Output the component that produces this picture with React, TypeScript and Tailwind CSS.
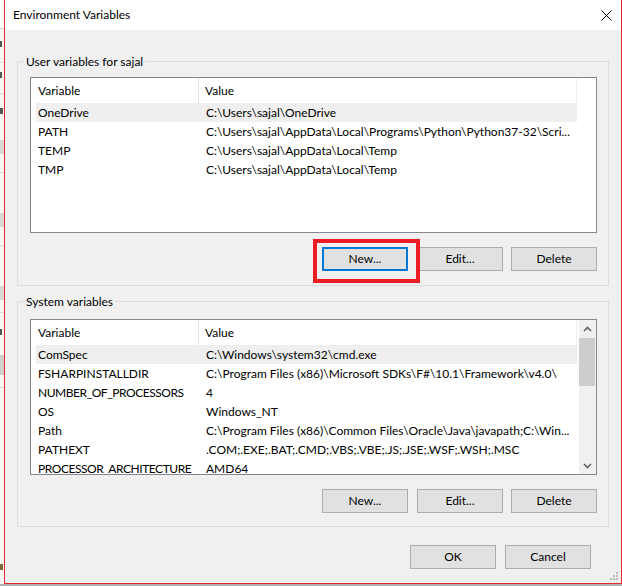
import React from "react";

const FONT = { fontFamily: 'Lato, "Liberation Sans", Arial, sans-serif' };

type Row = [string, string];

const userRows: Row[] = [
  ["OneDrive", "C:\\Users\\sajal\\OneDrive"],
  ["PATH", "C:\\Users\\sajal\\AppData\\Local\\Programs\\Python\\Python37-32\\Scri..."],
  ["TEMP", "C:\\Users\\sajal\\AppData\\Local\\Temp"],
  ["TMP", "C:\\Users\\sajal\\AppData\\Local\\Temp"],
];

const sysRows: Row[] = [
  ["ComSpec", "C:\\Windows\\system32\\cmd.exe"],
  ["FSHARPINSTALLDIR", "C:\\Program Files (x86)\\Microsoft SDKs\\F#\\10.1\\Framework\\v4.0\\"],
  ["NUMBER_OF_PROCESSORS", "4"],
  ["OS", "Windows_NT"],
  ["Path", "C:\\Program Files (x86)\\Common Files\\Oracle\\Java\\javapath;C:\\Win..."],
  ["PATHEXT", ".COM;.EXE;.BAT;.CMD;.VBS;.VBE;.JS;.JSE;.WSF;.WSH;.MSC"],
  ["PROCESSOR_ARCHITECTURE", "AMD64"],
];

function Columns({ rows }: { rows: Row[] }) {
  return (
    <div className="flex-1 overflow-hidden pl-[5px]">
      <div className="flex h-[25px]">
        <div className="w-[163px] pl-[2px] flex items-center border-r border-[#e5e5e5]">Variable</div>
        <div className="w-[378px] pl-[6px] flex items-center border-r border-[#f0f0f0]">Value</div>
      </div>
      {rows.map((r, i) => (
        <div
          key={r[0]}
          className={`flex h-[19px] w-[541px] items-center whitespace-nowrap ${i === 0 ? "bg-[#efefef]" : ""}`}
        >
          <div
            className={`w-[163px] pl-[2px] overflow-hidden ${
              r[0].length > 18 ? "tracking-[-0.45px]" : ""
            }`}
          >
            {r[0]}
          </div>
          <div className="w-[378px] pl-[7px] overflow-hidden">{r[1]}</div>
        </div>
      ))}
    </div>
  );
}

function Btn({ label, focus, className = "" }: { label: string; focus?: boolean; className?: string }) {
  return (
    <div
      className={`relative w-[86px] h-[24px] bg-[#e1e1e1] flex items-center justify-center ${
        focus ? "border-2 border-[#0078d7]" : "border border-[#adadad]"
      } ${className}`}
    >
      {label}
    </div>
  );
}

function Chevron({ up }: { up?: boolean }) {
  return (
    <svg width="9" height="6" viewBox="0 0 9 6">
      <polyline
        points={up ? "1,5 4.5,1.5 8,5" : "1,1 4.5,4.5 8,1"}
        fill="none"
        stroke="#606060"
        strokeWidth="1.6"
      />
    </svg>
  );
}

function LeftStrip() {
  return (
    <div className="w-[4px] flex flex-col bg-[#f7f7f7]">
      <div className="h-[28px] bg-white" />
      <div className="h-[1px] bg-[#d9d9d9]" />
      <div className="h-[12px]" />
      <div className="h-[6px] w-[2px] bg-[#555]" />
      <div className="h-[15px]" />
      <div className="h-[1px] bg-[#dcdcdc]" />
      <div className="h-[9px]" />
      <div className="h-[6px] w-[2px] bg-[#555]" />
      <div className="h-[15px]" />
      <div className="h-[1px] bg-[#dcdcdc]" />
      <div className="h-[14px]" />
      <div className="h-[6px] w-[3px] bg-[#555]" />
      <div className="h-[26px]" />
      <div className="h-[14px] bg-[#d9d9d9]" />
      <div className="h-[18px]" />
      <div className="h-[1px] bg-[#dcdcdc]" />
      <div className="h-[40px]" />
      <div className="h-[14px] bg-[#d9d9d9]" />
      <div className="h-[18px]" />
      <div className="h-[1px] bg-[#dcdcdc]" />
      <div className="h-[40px]" />
      <div className="h-[14px] bg-[#d9d9d9]" />
      <div className="h-[12px]" />
      <div className="h-[1px] bg-[#dcdcdc]" />
      <div className="h-[16px]" />
      <div className="h-[6px] w-[2px] bg-[#555]" />
      <div className="h-[20px]" />
      <div className="h-[20px] bg-[#d0d0d0]" />
      <div className="h-[12px]" />
      <div className="h-[1px] bg-[#dcdcdc]" />
      <div className="flex-1" />
      <div className="h-[6px] w-[3px] bg-[#7a6a40]" />
      <div className="h-[14px]" />
    </div>
  );
}

export default function App() {
  return (
    <div className="w-[622px] h-[586px] flex flex-col text-[12px] text-black bg-[#b0b0b0]" style={FONT}>
      <div className="flex h-[584px]">
        <LeftStrip />
        <div className="relative w-[618px] flex flex-col border-l border-r border-b border-[#e0282e]">
          {/* Title bar */}
          <div className="h-[30px] bg-white flex items-center justify-between pl-[8px] pr-[9px]">
            <span>Environment Variables</span>
            <svg width="11" height="11" viewBox="0 0 11 11">
              <path d="M0.5 0.5 L10.5 10.5 M10.5 0.5 L0.5 10.5" stroke="#000" strokeWidth="1" />
            </svg>
          </div>
          {/* Body */}
          <div className="flex-1 bg-[#f0f0f0] px-[12px] pt-[23px] flex flex-col">
            {/* User variables group */}
            <fieldset className="border border-[#dcdcdc]">
              <legend className="ml-[6px] px-[2px] leading-[17px]">User variables for sajal</legend>
              <div className="pl-[12px] pr-[11px] pt-[7px] pb-[14px] flex flex-col">
                <div className="h-[156px] border border-[#828790] bg-white flex">
                  <Columns rows={userRows} />
                </div>
                <div className="mt-[14px] flex justify-end">
                  <Btn label="New..." focus className="mr-[9px]" />
                  <Btn label="Edit..." className="mr-[8px]" />
                  <Btn label="Delete" />
                </div>
              </div>
            </fieldset>
            {/* System variables group */}
            <fieldset className="mt-[7px] border border-[#dcdcdc]">
              <legend className="ml-[6px] px-[2px] leading-[17px]">System variables</legend>
              <div className="pl-[12px] pr-[11px] pt-[9px] pb-[13px] flex flex-col">
                <div className="h-[156px] border border-[#828790] bg-white flex">
                  <Columns rows={sysRows} />
                  <div className="w-[17px] bg-[#f0f0f0] flex flex-col">
                    <div className="h-[17px] flex items-center justify-center">
                      <Chevron up />
                    </div>
                    <div className="mt-[1px] h-[48px] bg-[#cdcdcd] mr-[1px]" />
                    <div className="flex-1" />
                    <div className="h-[17px] flex items-center justify-center">
                      <Chevron />
                    </div>
                  </div>
                </div>
                <div className="mt-[14px] flex justify-end">
                  <Btn label="New..." className="mr-[9px]" />
                  <Btn label="Edit..." className="mr-[8px]" />
                  <Btn label="Delete" />
                </div>
              </div>
            </fieldset>
            {/* OK / Cancel */}
            <div className="mt-[18px] flex justify-end pr-[18px]">
              <Btn label="OK" className="mr-[9px]" />
              <Btn label="Cancel" />
            </div>
          </div>
          {/* Red annotation box around New... */}
          <div className="absolute left-[308px] top-[239px] w-[107px] h-[44px] border-4 border-[#ed1c24]" />
          {/* size grip */}
          <svg className="absolute right-[2px] bottom-[2px]" width="9" height="9" viewBox="0 0 9 9">
            <rect x="6" y="0" width="2" height="2" fill="#b8b8b8" />
            <rect x="3" y="3" width="2" height="2" fill="#b8b8b8" />
            <rect x="6" y="3" width="2" height="2" fill="#b8b8b8" />
            <rect x="0" y="6" width="2" height="2" fill="#b8b8b8" />
            <rect x="3" y="6" width="2" height="2" fill="#b8b8b8" />
            <rect x="6" y="6" width="2" height="2" fill="#b8b8b8" />
          </svg>
        </div>
      </div>
      <div className="h-[2px]" />
    </div>
  );
}
